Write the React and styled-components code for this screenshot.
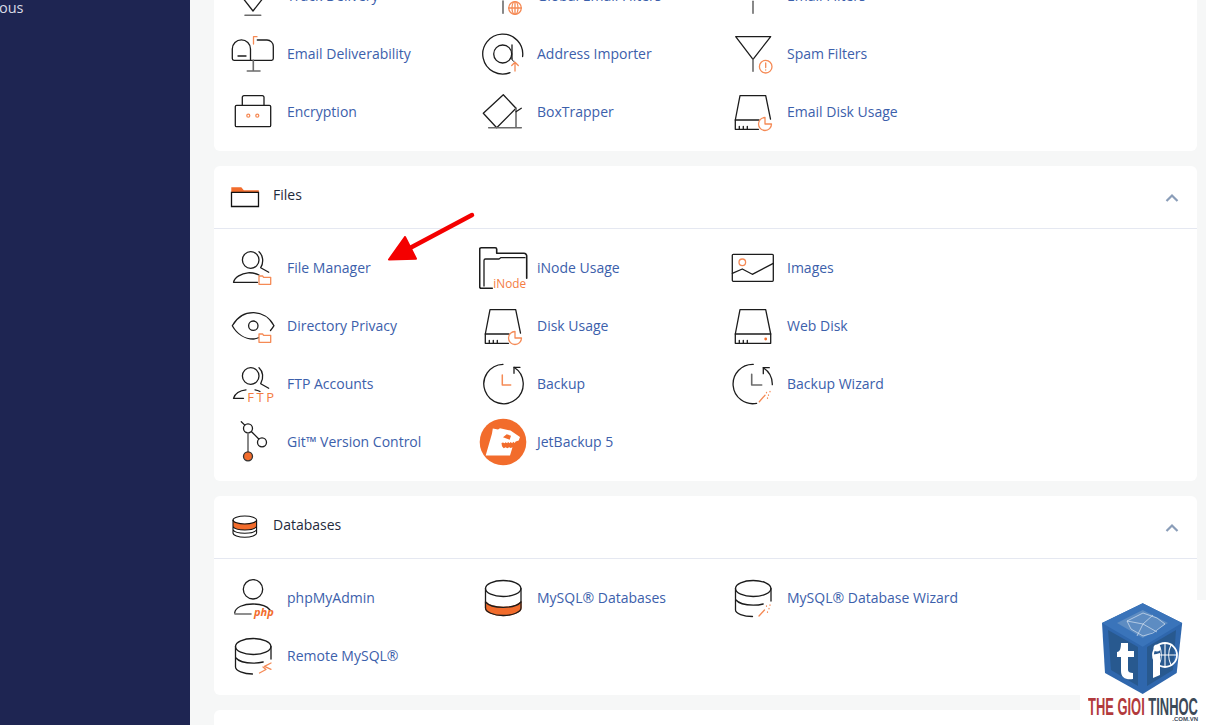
import React from 'react';
import styled, { createGlobalStyle } from 'styled-components';

const ORANGE = '#f58a55';
const DEEP = '#f26c2c';
const INK = '#1c1c1c';
const GREY = '#6b6b6b';

const GlobalStyle = createGlobalStyle`
  html, body {
    margin: 0;
    padding: 0;
    height: 725px;
    overflow: hidden;
    background: #f6f7f7;
    font-family: "Open Sans", "Liberation Sans", sans-serif;
  }
`;

const Page = styled.div`
  position: relative;
  display: flex;
  width: 1206px;
  height: 725px;
  overflow: hidden;
`;

const Sidebar = styled.nav`
  flex: 0 0 190px;
  background: #1e2552;
  color: #d9dbe6;
  font-size: 14.5px;
  line-height: 20px;
`;

const SideLabel = styled.div`
  margin: -2px 0 0 -1px;
`;

const Main = styled.main`
  flex: 1;
  display: flex;
  flex-direction: column;
  gap: 15px;
  margin-top: -43px;
  padding: 0 9px 0 24px;
`;

const Card = styled.section`
  background: #fff;
  border-radius: 6px;
  flex: none;
  min-height: ${props => props.$minHeight || 0}px;
`;

const Header = styled.header`
  display: flex;
  align-items: center;
  height: 62px;
  padding: 0 18px 0 15px;
  border-bottom: 1px solid #e5e8f1;
`;

const HeaderIcon = styled.svg`
  width: 32px;
  height: 32px;
  margin-right: 12px;
  flex: none;
`;

const HeaderTitle = styled.h2`
  flex: 1;
  margin: 0 0 6px;
  font-size: 14px;
  font-weight: 400;
  color: #1f2a3c;
`;

const Chevron = styled.svg`
  width: 14px;
  height: 10px;
  margin-top: 2px;
`;

const Grid = styled.div`
  display: grid;
  grid-template-columns: repeat(3, 250px);
  grid-auto-rows: 58px;
  padding: 10px 15px;
`;

const Item = styled.a`
  display: flex;
  align-items: center;
  gap: 8px;
  font-size: 14px;
  color: #3c60ab;
  text-decoration: none;
  white-space: nowrap;
`;

const IconSvg = styled.svg`
  width: 50px;
  height: 50px;
  flex: none;
`;

const Label = styled.span`
  margin-bottom: 1px;
`;

const ArrowOverlay = styled.svg`
  position: absolute;
  left: 380px;
  top: 205px;
  width: 100px;
  height: 65px;
`;

const Watermark = styled.div`
  position: absolute;
  right: 0;
  bottom: 0;
  width: 126px;
  height: 125px;
  background: #fff;
  display: flex;
  flex-direction: column;
  align-items: center;
`;

const Cube = styled.svg`
  width: 88px;
  height: 93px;
  margin-top: 2px;
  margin-left: 2px;
  flex: none;
`;

const Brand = styled.div`
  align-self: flex-start;
  margin: 1px 0 0 8px;
  font-family: "Liberation Sans", sans-serif;
  font-weight: 700;
  font-size: 23.5px;
  line-height: 22px;
  white-space: nowrap;
  color: #b23a3c;
  transform: scaleX(0.55);
  transform-origin: left center;
`;

const BrandDark = styled.span`
  color: #3c4a58;
`;

const BrandSub = styled.div`
  align-self: flex-end;
  margin: -2px 8px 0 0;
  font-family: "Liberation Sans", sans-serif;
  font-weight: 700;
  font-size: 6px;
  line-height: 7px;
  color: #3c4a58;
`;

const Icon = ({ children }) => (
  <IconSvg viewBox="0 0 50 50" fill="none" stroke={INK} strokeWidth="1.3" strokeLinecap="round" strokeLinejoin="round">
    {children}
  </IconSvg>
);

const Or = ({ children }) => (
  <g stroke={ORANGE} strokeWidth="1.3">{children}</g>
);

const Stem = ({ d }) => <path d={d} stroke={GREY} strokeWidth="1.6" />;

const SmallFolder = () => (
  <Or>
    <path d="M30 41.3V33h3.600l1 1.300h7.100v7z" fill="#fff" />
  </Or>
);

const Person = () => (
  <>
    <circle cx="21.7" cy="17" r="8.3" />
    <path d="M30 8.700c4 3.500 5 10.500 1.700 16l8 4.600" />
  </>
);

const Pie = ({ cx = 36, cy = 37 }) => (
  <Or>
    <path d={`M${cx} ${cy - 6.5}A6.500 6.500 0 1 0 ${cx + 6.5} ${cy}H${cx}z`} fill="#fff" />
  </Or>
);

const DiskTicks = () => <path d="M10.300 42.300v-3M14.300 42.300v-3M18.300 42.300v-3" />;

const DiskBody = () => (
  <>
    <path d="M11 8.700h25.700l5 24.300v9.300H6.300V33z" />
    <path d="M6.300 33H41.700" />
    <DiskTicks />
  </>
);

// disk whose lower right corner is taken by the usage pie
const PieDisk = () => (
  <>
    <path d="M29.500 42.300H6.300V33L11 8.700h25.700l4.800 23.500" />
    <path d="M6.300 33H30" />
    <DiskTicks />
    <Pie />
  </>
);

const Funnel = () => (
  <>
    <path d="M6.700 7.700h35L24 30.300z" />
    <Stem d="M24 30.300V42.300" />
  </>
);

const DbTop = () => <ellipse cx="24.200" cy="15.500" rx="17.700" ry="8" />;

const TrackDelivery = () => (
  <Icon>
    <path d="M8 4l16 22L33 4" />
    <Stem d="M16 44.300h15.700" />
    <path d="M15 28.500l9 11.500 9-11.500" />
  </Icon>
);

const GlobalFilters = () => (
  <Icon>
    <Stem d="M24 30V42.300" />
    <Or>
      <circle cx="36" cy="37" r="6.300" />
      <path d="M29.700 37h12.600M36 30.700v12.600" />
      <ellipse cx="36" cy="37" rx="3" ry="6.300" />
    </Or>
  </Icon>
);

const EmailFilters = () => (
  <Icon>
    <Stem d="M24 30.300V42.300" />
  </Icon>
);

const Mailbox = () => (
  <Icon>
    <path d="M5 31.300a1.700 1.700 0 0 1-1.700-1.700V20a9.100 9.100 0 0 1 18.200 0v11.300zM28.300 11h9.700a6.300 6.300 0 0 1 6.300 6.300v12.300a1.700 1.700 0 0 1-1.700 1.700H21.500" />
    <path d="M9 27h8" />
    <Stem d="M24.300 31.300V42M18.300 42H31" />
    <Or>
      <path d="M24.500 15V7.700H28" />
    </Or>
  </Icon>
);

const AddressImporter = () => (
  <Icon>
    <path d="M43.600 27.500A20 20 0 1 0 31 43.700" />
    <circle cx="23.700" cy="25" r="9" />
    <path d="M33 16v14" />
    <path d="M33 30c0 1.500 1 2.300 2 2.300" strokeWidth="1" />
    <Or>
      <path d="M36 42V33.200M32.700 36.500L36 33.200l3.300 3.300" />
    </Or>
  </Icon>
);

const SpamFilters = () => (
  <Icon>
    <Funnel />
    <Or>
      <circle cx="36.700" cy="37.700" r="6.300" fill="#fff" />
      <path d="M36.700 34v4.600M36.700 40.800v.3" />
    </Or>
  </Icon>
);

const Encryption = () => (
  <Icon>
    <rect x="6.300" y="18.300" width="35.400" height="21.400" rx="1.300" />
    <path d="M13.300 18.300v-8a1.600 1.600 0 0 1 1.600-1.600h18.500a1.600 1.600 0 0 1 1.600 1.600v8" />
    <Or>
      <circle cx="19.300" cy="28.700" r="1.500" />
      <circle cx="28.300" cy="28.700" r="1.500" />
    </Or>
  </Icon>
);

const BoxTrapper = () => (
  <Icon>
    <path d="M24.300 7.700L37 21.300 17.700 40.700 4.300 26.300z" />
    <Stem d="M9.700 40.700h32.600M37 21.300v19.400" />
    <path d="M37 24.700l5.300-3.400" />
  </Icon>
);

const EmailDisk = () => (
  <Icon>
    <PieDisk />
  </Icon>
);

const FileManager = () => (
  <Icon>
    <Person />
    <path d="M4.500 39.300c1-5 8-9 14.500-9.500 4-.2 8 .6 11 2.200M4.500 39.300h24" />
    <SmallFolder />
  </Icon>
);

const INode = () => (
  <Icon>
    <path d="M13.300 45.300H2.200a1.500 1.500 0 0 1-1.500-1.500V6.200a1.500 1.500 0 0 1 1.500-1.500h14a1.500 1.500 0 0 1 1.500 1.500v4.100H45a2.700 2.700 0 0 1 2.700 2.700v22.300" strokeWidth="1.600" />
    <path d="M5 43V17.500a1.500 1.500 0 0 1 1.500-1.500H20l1.700-1.300H46" strokeWidth="1.300" />
    <text x="14.300" y="45.300" fill="#f47c42" stroke="none" fontSize="11.800" fontFamily="Open Sans, sans-serif">iNode</text>
  </Icon>
);

const Images = () => (
  <Icon>
    <rect x="3.300" y="11.300" width="41" height="27" rx="1" />
    <path d="M3.300 30.300L13.300 26l10 5.300 21-11" />
    <Or>
      <circle cx="13.300" cy="19.300" r="3.300" />
    </Or>
  </Icon>
);

const DirectoryPrivacy = () => (
  <Icon>
    <path d="M30 36.500c-1.900.9-3.800 1.500-5.700 1.500-8.300 0-16.300-5-21-13.300C8 16.500 16 11.700 24.300 11.700S40.500 16.500 45 24.700c-1 1.700-2.200 3.300-3.500 4.800" />
    <circle cx="24.300" cy="24.700" r="4.700" />
    <SmallFolder />
  </Icon>
);

const DiskUsage = () => (
  <Icon>
    <PieDisk />
  </Icon>
);

const WebDisk = () => (
  <Icon>
    <DiskBody />
    <circle cx="36.700" cy="38" r="1.400" fill={DEEP} stroke="none" />
  </Icon>
);

const FtpAccounts = () => (
  <Icon>
    <Person />
    <path d="M17 30.800C11 31.300 5.500 34.500 4.500 39.300h10" />
    <path d="M26 30.800c1.500.2 3.500.8 5 1.700" />
    <text x="18.300" y="43" fill="#f47c42" stroke="none" fontSize="13" letterSpacing="2.500" fontFamily="Open Sans, sans-serif">FTP</text>
  </Icon>
);

const Backup = () => (
  <Icon>
    <path d="M35 8.300A19.700 19.700 0 1 1 24 5.300" />
    <path d="M41 8.300h-6v6" />
    <Or>
      <path d="M23.300 16v10h8.400" strokeWidth="1.500" />
    </Or>
  </Icon>
);

const BackupWizard = () => (
  <Icon>
    <path d="M24.300 5.300A19.700 19.700 0 1 0 27.700 44.300M34.300 8.700a19.700 19.700 0 0 1 9 17" />
    <path d="M40.300 8.700h-6v6" />
    <Stem d="M22.700 15.300V26h10" />
    <Or>
      <path d="M30.300 42.700l5.700-6.500" />
      <path d="M37.500 33.500v.3M39.500 36v.3M41 32.500v.3M38.500 39v.3" />
    </Or>
  </Icon>
);

const GitControl = () => (
  <Icon>
    <path d="M12.300 4.700l3.500 3.400M22.300 14.500l7.500 7.500" />
    <circle cx="19" cy="11.300" r="4.500" />
    <circle cx="33" cy="25.300" r="4.500" />
    <Stem d="M19 15.800v19" />
    <circle cx="19" cy="39.300" r="4.500" fill={DEEP} stroke="#333" />
  </Icon>
);

const JetBackup = () => (
  <Icon>
    <circle cx="24" cy="25" r="23.300" fill={DEEP} stroke="none" />
    <path
      fill="#fff"
      stroke="none"
      fillRule="evenodd"
      d="M13 16.500l.8-5 5.200 1 2-1.300 10.500 2.300 9.500 6.500-1.300 3.500-3 1-1 1.500-1.500-1.200-1 1.400-1.600-1.200-1 1.300-1.500-1.200-1 1.200-1.600-1-1 1-1.500-.8-1.500.5.500 3.200 1.700 2 2-1 1.500 1 2-1 1.500.8 1.800-.8L31 38.400H6.700zM24 20.300l6.700 2.400 1.300-4-4.300-1.500z"
    />
  </Icon>
);

const PhpMyAdmin = () => (
  <Icon>
    <circle cx="24" cy="16.300" r="9.700" />
    <path d="M5.700 40c.5-6 9-9 18.300-9 6.500 0 13.500 1.600 17 6" />
    <Stem d="M6 41h16" />
    <text x="25" y="42.500" fill={DEEP} stroke="none" fontSize="11" fontWeight="700" fontStyle="italic" fontFamily="Open Sans, sans-serif">php</text>
  </Icon>
);

const MySqlDatabases = () => (
  <Icon>
    <path d="M6.500 29v6c0 4 8 7.500 17.700 7.500S42 39 42 35v-6c-3 3.500-10 5.300-17.800 5.300S9.500 32.500 6.500 29z" fill={DEEP} stroke={DEEP} />
    <DbTop />
    <path d="M6.500 15.500V35c0 4 8 7.500 17.700 7.500S42 39 42 35V15.500" />
    <path d="M6.500 29c3 3.500 9.800 5.300 17.700 5.300S39 32.500 42 29" />
  </Icon>
);

const DatabaseWizard = () => (
  <Icon>
    <DbTop />
    <path d="M6.500 15.500V37c0 3.500 8 6.500 17 6.500M42 15.500V28M6.500 26.500c3 3.800 9.800 5.700 17.700 5.700 3.500 0 7-.4 10-1.200" />
    <Or>
      <path d="M30 43l5.500-6" />
      <path d="M37.500 33v.3M40 35.500v.3M41 32v.3M38.500 39v.3" />
    </Or>
  </Icon>
);

const RemoteMySql = () => (
  <Icon>
    <DbTop />
    <path d="M6.500 15.500V36c0 3.500 8 7 17 7M42 15.500V28M6.500 26.500c3 3.800 9.800 5.700 17.700 5.700 3.500 0 7-.4 10-1.200" />
    <Or>
      <path d="M30.500 42l6.500-3.500-3-2.500M42 32l-6.500 3.300 6.500 3" />
    </Or>
  </Icon>
);

const FolderHead = () => (
  <HeaderIcon viewBox="0 0 32 32" fill="none" stroke="#111" strokeWidth="1.300">
    <path d="M2.300 6.300h10l2.500 3h15v2H2.300z" fill={DEEP} stroke="none" />
    <path d="M2.500 11.300h27v14.200h-27z" />
  </HeaderIcon>
);

const DatabaseHead = () => (
  <HeaderIcon viewBox="0 0 32 32" fill="none" stroke="#111" strokeWidth="1.100">
    <path d="M4 9c1.500 2.500 6 3.700 11.800 3.700S26 11.500 27.600 9v6.500c-1.500 2.500-6 3.500-11.800 3.500S5.500 18 4 15.500z" fill={DEEP} stroke="none" />
    <ellipse cx="15.800" cy="9" rx="11.800" ry="4" />
    <path d="M4 9v13c0 2.300 5.300 4.300 11.800 4.300S27.600 24.300 27.600 22V9M4 15.500c1.500 2.500 6 3.500 11.800 3.500s10.300-1 11.800-3.500M4 18.800c1.500 2.500 6 3.500 11.800 3.500s10.300-1 11.800-3.500" />
  </HeaderIcon>
);

const CardHeader = ({ icon, title }) => (
  <Header>
    {icon}
    <HeaderTitle>{title}</HeaderTitle>
    <Chevron viewBox="0 0 14 10" fill="none" stroke="#8a9db8" strokeWidth="2.200">
      <path d="M1.500 8L7 2.500 12.500 8" />
    </Chevron>
  </Header>
);

const emailItems = [
  { label: 'Track Delivery', icon: TrackDelivery },
  { label: 'Global Email Filters', icon: GlobalFilters },
  { label: 'Email Filters', icon: EmailFilters },
  { label: 'Email Deliverability', icon: Mailbox },
  { label: 'Address Importer', icon: AddressImporter },
  { label: 'Spam Filters', icon: SpamFilters },
  { label: 'Encryption', icon: Encryption },
  { label: 'BoxTrapper', icon: BoxTrapper },
  { label: 'Email Disk Usage', icon: EmailDisk },
];

const fileItems = [
  { label: 'File Manager', icon: FileManager },
  { label: 'iNode Usage', icon: INode },
  { label: 'Images', icon: Images },
  { label: 'Directory Privacy', icon: DirectoryPrivacy },
  { label: 'Disk Usage', icon: DiskUsage },
  { label: 'Web Disk', icon: WebDisk },
  { label: 'FTP Accounts', icon: FtpAccounts },
  { label: 'Backup', icon: Backup },
  { label: 'Backup Wizard', icon: BackupWizard },
  { label: 'Git™ Version Control', icon: GitControl },
  { label: 'JetBackup 5', icon: JetBackup },
];

const databaseItems = [
  { label: 'phpMyAdmin', icon: PhpMyAdmin },
  { label: 'MySQL® Databases', icon: MySqlDatabases },
  { label: 'MySQL® Database Wizard', icon: DatabaseWizard },
  { label: 'Remote MySQL®', icon: RemoteMySql },
];

const Items = ({ items }) => (
  <Grid>
    {items.map(({ label, icon: ItemIcon }) => (
      <Item href="#" key={label}>
        <ItemIcon />
        <Label>{label}</Label>
      </Item>
    ))}
  </Grid>
);

const App = () => (
  <Page>
    <GlobalStyle />
    <Sidebar>
      <SideLabel>ous</SideLabel>
    </Sidebar>
    <Main>
      <Card>
        <Items items={emailItems} />
      </Card>
      <Card>
        <CardHeader icon={<FolderHead />} title="Files" />
        <Items items={fileItems} />
      </Card>
      <Card>
        <CardHeader icon={<DatabaseHead />} title="Databases" />
        <Items items={databaseItems} />
      </Card>
      <Card $minHeight={60} />
    </Main>
    <ArrowOverlay viewBox="0 0 100 65">
      <path d="M92 10L30 43" stroke="#f40000" strokeWidth="4.500" strokeLinecap="round" />
      <path d="M25 32L9 54.500l27-.8z" fill="#f40000" stroke="#f40000" strokeWidth="2" strokeLinejoin="round" />
    </ArrowOverlay>
    <Watermark>
      <Cube viewBox="0 0 88 93">
        <path d="M42.700 1.300L2 21l3 50 37.700 21 34-21 5.500-50z" fill="#2f67ad" />
        <path d="M42.700 1.300L82 21 42.700 44.700 2 21z" fill="#3a74ba" />
        <path d="M42.700 8L68 21 42.700 36 17 21z" fill="#5d8cc2" />
        <path d="M27 19l16-8 14 5 8 6-12 9-10 3-12-7zM27 19l16 3 10-9M43 22l-6 12M43 22l14 8" fill="none" stroke="#d5e3f1" strokeWidth="0.700" />
        <path d="M8 28l30 17v39L11 68z" fill="#28598f" />
        <path d="M76 28L47 45v39l26-16z" fill="#28598f" />
        <path d="M21 41h7v8h6v6h-6v13c0 2 2 3 5 3v6c-7 1-12-1-12-8V55h-4v-5c3 0 4-4 4-9z" fill="#fff" />
        <circle cx="65" cy="53" r="12" fill="none" stroke="#fff" strokeWidth="1.800" />
        <path d="M53 53h24M65 41v24M59 43c3 6 3 14 0 20M71 43c-3 6-3 14 0 20" fill="none" stroke="#fff" strokeWidth="1.100" />
        <path d="M53 53l7-2v22l-7 3z" fill="#fff" />
        <circle cx="57" cy="46" r="3.500" fill="#fff" />
      </Cube>
      <Brand>THE GIOI <BrandDark>TINHOC</BrandDark></Brand>
      <BrandSub>.COM.VN</BrandSub>
    </Watermark>
  </Page>
);

export default App;
